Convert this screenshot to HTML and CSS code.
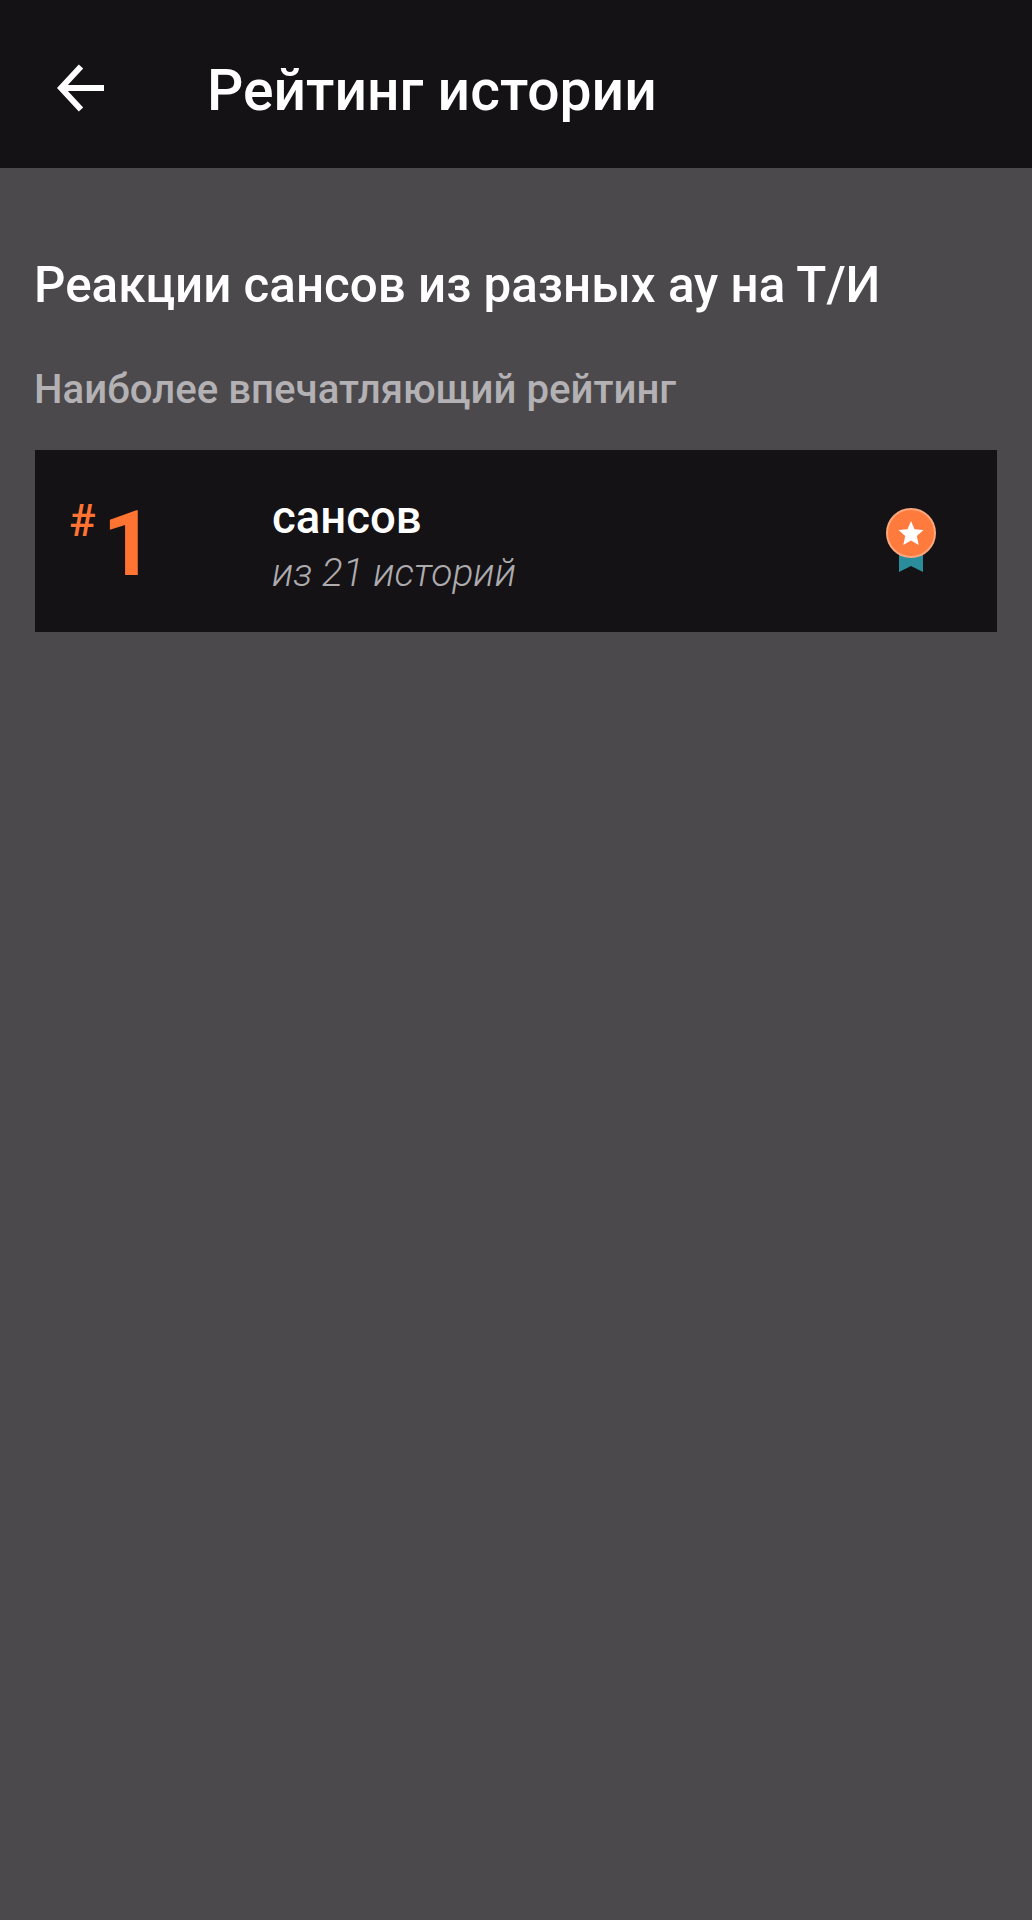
FILE: index.html
```html
<!DOCTYPE html>
<html lang="ru">
<head>
<meta charset="utf-8">
<title>Рейтинг истории</title>
<link rel="stylesheet" href="styles.css">
</head>
<body>
<header class="topbar">
  <svg class="back" width="48" height="48" viewBox="0 0 48 48" aria-hidden="true"><path d="M47 24H6M24 2.500L4 24L24 45.500" fill="none" stroke="#fff" stroke-width="6"/></svg>
  <h1 class="topbar-title">Рейтинг истории</h1>
</header>
<main class="content">
  <h2 class="story-title">Реакции сансов из разных ау на Т/И</h2>
  <h3 class="section-title">Наиболее впечатляющий рейтинг</h3>
  <section class="rank-card">
    <div class="rank"><span class="rank-hash">#</span><span class="rank-num">1</span></div>
    <div class="rank-info">
      <div class="rank-name">сансов</div>
      <div class="rank-sub">из 21 историй</div>
    </div>
    <svg class="medal" width="50" height="64" viewBox="0 0 50 64" aria-hidden="true">
      <path d="M13 40H37V64L25 58L13 64Z" fill="#2b8c9c"/>
      <circle cx="25" cy="25" r="24" fill="#ff7a3d" stroke="#fba77e" stroke-width="2"/>
      <path d="M25 13L28.500 21.200L37.500 22.100L30.800 28L32.700 37L25 32.400L17.300 37L19.200 28L12.500 22.100L21.500 21.200Z" fill="#fff"/>
    </svg>
  </section>
</main>
</body>
</html>
```
FILE: styles.css
```css
* { box-sizing: border-box; }
html, body { margin: 0; height: 100%; }
body { background: #4b494c; font-family: Roboto, "Noto Sans", sans-serif; color: #fff; min-height: 1920px; }
h1, h2, h3 { margin: 0; }
.topbar { height: 168px; background: #141215; display: flex; align-items: center; padding-left: 57px; }
.back { flex: none; margin-top: 8px; }
.topbar-title { margin: 12px 0 0 102px; font-size: 57px; font-weight: 500; line-height: 1; }
.content { padding: 89px 35px 0; }
.story-title { font-size: 49.300px; font-weight: 500; line-height: 56px; margin-left: -1px; }
.section-title { margin-top: 55px; font-size: 40.200px; font-weight: 500; line-height: 44px; color: #b3b1b4; margin-left: -1px; }
.rank-card { margin-top: 38px; height: 182px; background: #141215; display: flex; align-items: center; padding: 0 60px 0 34px; }
.rank { width: 203px; flex: none; display: flex; align-items: flex-start; color: #ff7433; margin-top: 8px; }
.rank-hash { font-size: 44px; line-height: 48px; font-weight: 500; margin: -3px 7px 0 0; }
.rank-num { font-size: 90px; line-height: 90px; font-weight: 700; }
.rank-info { flex: 1; padding-top: 6px; }
.rank-name { font-size: 45.500px; font-weight: 500; line-height: 50px; }
.rank-sub { font-size: 39px; font-weight: 300; font-style: italic; line-height: 44px; color: #adabae; margin-top: 8px; }
.medal { flex: none; margin: 0 1px 3px 0; }
```
